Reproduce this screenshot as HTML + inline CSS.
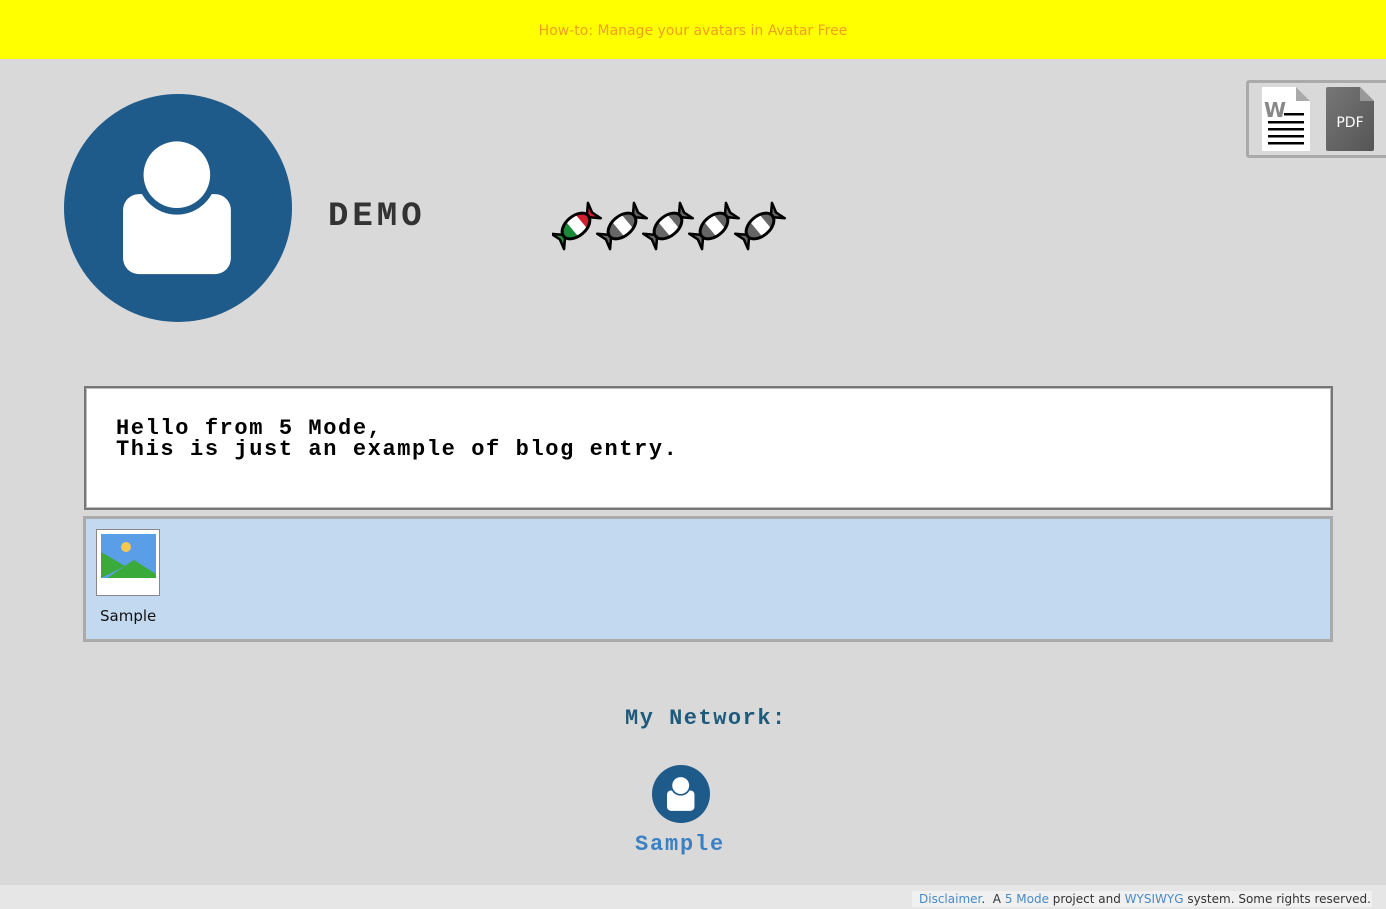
<!DOCTYPE html>
<html><head><meta charset="utf-8"><style>
*{margin:0;padding:0;box-sizing:border-box}
body{width:1386px;height:909px;background:#d9d9d9;position:relative;overflow:hidden;font-family:"DejaVu Sans","Liberation Sans",sans-serif}
.top{position:absolute;left:0;top:0;width:1386px;height:59px;background:#ffff00;text-align:center;line-height:62px;font-size:14px;color:#f0a020}
.pix{font-family:"Liberation Mono",monospace;font-weight:bold}
.abs{position:absolute}
.blog{left:84px;top:386px;width:1249px;height:124px;background:#fff;border:2px solid #777;box-shadow:inset 0 0 0 1px #bbb}
.blog p{position:absolute;left:30px;top:30px;font-size:22px;letter-spacing:1.6px;line-height:21px;color:#000;white-space:pre}
.gal{left:83px;top:516px;width:1250px;height:126px;background:#c3d9f0;border:3px solid #aaa}
.footer{left:0;top:885px;width:1386px;height:24px;background:#e6e6e6}
.footer span{position:absolute;right:14px;top:6px;font-size:12px;color:#333;background:#f0f0f0;padding:0 1px 0 7px;line-height:16px}
.footer a{color:#4a8ac4;text-decoration:none}
</style></head><body>
<div class="top">How-to: Manage your avatars in Avatar Free</div>

<svg class="abs" style="left:64px;top:94px" width="228" height="228" viewBox="0 0 100 100">
<circle cx="50" cy="50" r="50" fill="#1e5a8a"/>
<rect x="25.9" y="43.9" width="47.3" height="35.1" rx="7" fill="#fff"/>
<circle cx="49.5" cy="35.4" r="17.5" fill="#1e5a8a"/>
<circle cx="49.5" cy="35.4" r="14.6" fill="#fff"/>
</svg>

<div class="abs pix" style="left:328px;top:198px;font-size:34px;letter-spacing:4px;color:#333">DEMO</div>

<svg class="abs" style="left:552px;top:200px" width="240" height="52" viewBox="0 0 240 52">
<defs>
<clipPath id="e"><ellipse cx="24" cy="26" rx="15" ry="9"/></clipPath>
<g id="gr"><g transform="rotate(-40 24 26)">
<path d="M10 26 L0 16 L3 26 L0 36 Z" fill="#666" stroke="#000" stroke-width="2.5" stroke-linejoin="round"/>
<path d="M38 26 L48 16 L45 26 L48 36 Z" fill="#666" stroke="#000" stroke-width="2.5" stroke-linejoin="round"/>
<ellipse cx="24" cy="26" rx="16" ry="10" fill="#fff"/>
<g clip-path="url(#e)"><rect x="8" y="14" width="11" height="24" fill="#666"/><rect x="31" y="14" width="12" height="24" fill="#666"/></g>
<ellipse cx="24" cy="26" rx="16" ry="10" fill="none" stroke="#000" stroke-width="3"/>
</g></g>
</defs>
<g transform="rotate(-40 24 26)">
<path d="M10 26 L0 16 L3 26 L0 36 Z" fill="#2a8a3a" stroke="#000" stroke-width="2.5" stroke-linejoin="round"/>
<path d="M38 26 L48 16 L45 26 L48 36 Z" fill="#d02030" stroke="#000" stroke-width="2.5" stroke-linejoin="round"/>
<ellipse cx="24" cy="26" rx="16" ry="10" fill="#fff"/>
<g clip-path="url(#e)"><rect x="8" y="14" width="11" height="24" fill="#1a8a3a"/><rect x="31" y="14" width="12" height="24" fill="#d02030"/></g>
<ellipse cx="24" cy="26" rx="16" ry="10" fill="none" stroke="#000" stroke-width="3"/>
</g>
<use href="#gr" x="46"/><use href="#gr" x="92"/><use href="#gr" x="138"/><use href="#gr" x="184"/>
</svg>

<div class="abs" style="left:1246px;top:80px;width:150px;height:78px;border:3px solid #aaa;border-radius:3px"></div>
<svg class="abs" style="left:1262px;top:87px" width="48" height="64" viewBox="0 0 48 64">
<path d="M0 0 H34 L48 14 V64 H0 Z" fill="#fff"/><path d="M34 0 L48 14 H34 Z" fill="#aaa"/>
<text x="2" y="30" font-family="DejaVu Sans" font-weight="bold" font-size="20" fill="#888">W</text>
<rect x="22" y="26" width="20" height="2.5" fill="#000"/>
<rect x="6" y="34" width="36" height="2.5" fill="#000"/>
<rect x="6" y="41" width="36" height="2.5" fill="#000"/>
<rect x="6" y="48" width="36" height="2.5" fill="#000"/>
<rect x="6" y="55" width="36" height="2.5" fill="#000"/>
</svg>
<svg class="abs" style="left:1326px;top:87px" width="48" height="64" viewBox="0 0 48 64">
<defs><linearGradient id="pg" x1="0" y1="0" x2="1" y2="1"><stop offset="0" stop-color="#777"/><stop offset="1" stop-color="#555"/></linearGradient></defs>
<path d="M2 0 H34 L48 14 V62 Q48 64 46 64 H2 Q0 64 0 62 V2 Q0 0 2 0 Z" fill="url(#pg)"/><path d="M34 0 L48 14 H34 Z" fill="#999"/>
<text x="24" y="40" text-anchor="middle" font-family="DejaVu Sans" font-size="14" fill="#fff">PDF</text>
</svg>

<div class="abs blog"><p class="pix">Hello from 5 Mode,
This is just an example of blog entry.</p></div>

<div class="abs gal">
<div class="abs" style="left:10px;top:10px;width:64px;height:67px;background:#fff;border:1px solid #888"></div>
<svg class="abs" style="left:15px;top:15px" width="55" height="44" viewBox="0 0 55 44">
<rect width="55" height="44" fill="#5b9ee8"/>
<circle cx="25" cy="13" r="5" fill="#f6c94e"/>
<path d="M0 18 L24 32 L0 44 Z" fill="#3aaa3a"/>
<path d="M6 44 L33 26 L55 40 V44 Z" fill="#3aaa3a"/>
</svg>
<div class="abs" style="left:14px;top:88px;font-size:15px;color:#111">Sample</div>
</div>

<div class="abs pix" style="left:625px;top:706px;font-size:22px;letter-spacing:1.5px;color:#1e5a7a">My Network:</div>
<svg class="abs" style="left:652px;top:765px" width="58" height="58" viewBox="0 0 100 100">
<circle cx="50" cy="50" r="50" fill="#1e5a8a"/>
<rect x="25.9" y="43.9" width="47.3" height="35.1" rx="7" fill="#fff"/>
<circle cx="49.5" cy="35.4" r="17.5" fill="#1e5a8a"/>
<circle cx="49.5" cy="35.4" r="14.6" fill="#fff"/>
</svg>
<div class="abs pix" style="left:635px;top:832px;font-size:22px;letter-spacing:1.8px;color:#3a80c4">Sample</div>

<div class="abs footer"><span><a>Disclaimer</a>.&nbsp; A <a>5 Mode</a> project and <a>WYSIWYG</a> system. Some rights reserved.</span></div>
</body></html>
